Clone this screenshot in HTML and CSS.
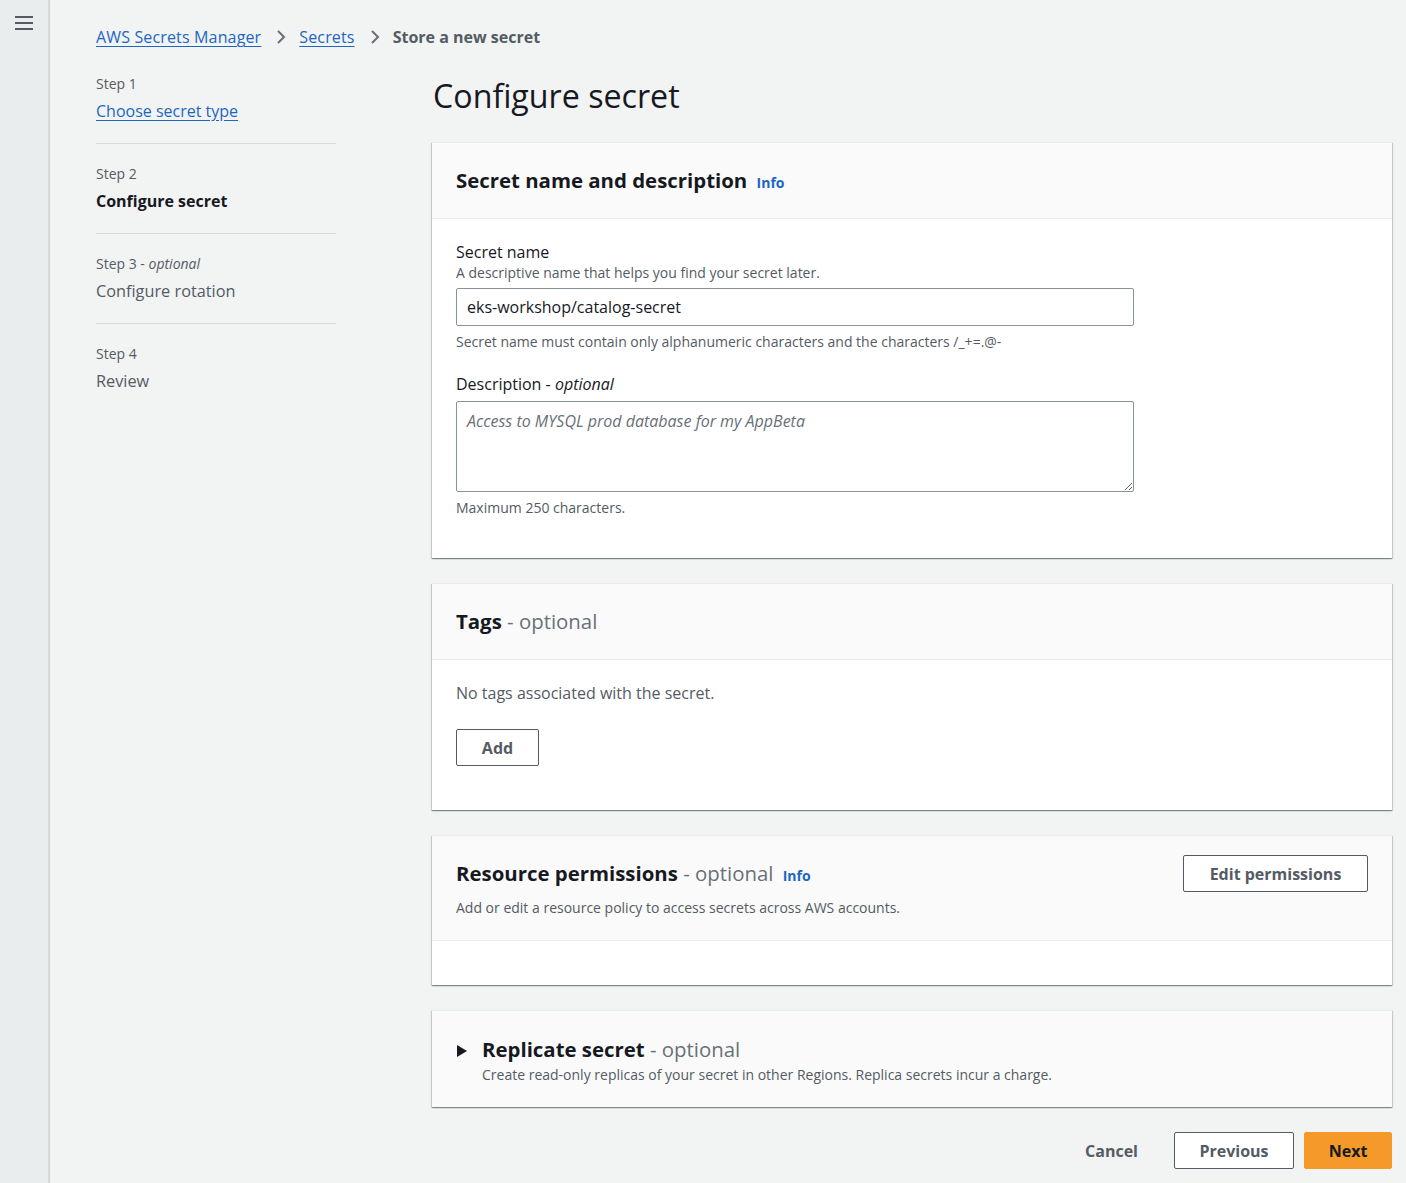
FILE: index.html
```html
<!DOCTYPE html>
<html lang="en">
<head>
<meta charset="utf-8">
<title>Store a new secret</title>
<link rel="stylesheet" href="styles.css">
</head>
<body>
<div class="app">
  <aside class="sidenav">
    <button class="menu-btn" aria-label="Open navigation">
      <svg width="18" height="14" viewBox="0 0 18 14"><path d="M0 1h18M0 7h18M0 13h18" stroke="#545b64" stroke-width="2"/></svg>
    </button>
  </aside>
  <div class="page">
    <nav class="breadcrumbs">
      <a href="#" class="crumb-link">AWS Secrets Manager</a>
      <svg class="chev" width="16" height="16" viewBox="0 0 16 16"><path d="M5 2l6 6-6 6" fill="none" stroke="#687078" stroke-width="2"/></svg>
      <a href="#" class="crumb-link">Secrets</a>
      <svg class="chev" width="16" height="16" viewBox="0 0 16 16"><path d="M5 2l6 6-6 6" fill="none" stroke="#687078" stroke-width="2"/></svg>
      <span class="crumb-current">Store a new secret</span>
    </nav>
    <div class="layout">
      <ol class="steps">
        <li class="step">
          <div class="step-label">Step 1</div>
          <a href="#" class="step-title link">Choose secret type</a>
        </li>
        <li class="step">
          <div class="step-label">Step 2</div>
          <div class="step-title active">Configure secret</div>
        </li>
        <li class="step">
          <div class="step-label">Step 3 - <i>optional</i></div>
          <div class="step-title muted">Configure rotation</div>
        </li>
        <li class="step last">
          <div class="step-label">Step 4</div>
          <div class="step-title muted">Review</div>
        </li>
      </ol>
      <main class="content">
        <h1 class="page-title">Configure secret</h1>

        <section class="panel">
          <header class="panel-header">
            <h2 class="panel-title">Secret name and description <a href="#" class="info">Info</a></h2>
          </header>
          <div class="panel-body">
            <div class="field">
              <label class="field-label">Secret name</label>
              <div class="field-desc">A descriptive name that helps you find your secret later.</div>
              <input class="text-input" type="text" value="eks-workshop/catalog-secret">
              <div class="field-hint">Secret name must contain only alphanumeric characters and the characters /_+=.@-</div>
            </div>
            <div class="field second">
              <label class="field-label">Description - <i>optional</i></label>
              <textarea class="text-area" placeholder="Access to MYSQL prod database for my AppBeta"></textarea>
              <div class="field-hint">Maximum 250 characters.</div>
            </div>
          </div>
        </section>

        <section class="panel">
          <header class="panel-header">
            <h2 class="panel-title">Tags <span class="opt">- optional</span></h2>
          </header>
          <div class="panel-body tags-body">
            <p class="empty-text">No tags associated with the secret.</p>
            <button class="btn add-btn">Add</button>
          </div>
        </section>

        <section class="panel">
          <header class="panel-header perm-header">
            <div class="perm-text">
              <h2 class="panel-title">Resource permissions <span class="opt">- optional</span> <a href="#" class="info">Info</a></h2>
              <div class="panel-desc">Add or edit a resource policy to access secrets across AWS accounts.</div>
            </div>
            <button class="btn edit-btn">Edit permissions</button>
          </header>
          <div class="panel-body empty-body"></div>
        </section>

        <section class="panel expand">
          <div class="expand-head">
            <span class="caret"><svg width="10" height="12" viewBox="0 0 10 12"><path d="M0 0l10 6-10 6z" fill="#16191f"/></svg></span>
            <div>
              <h2 class="panel-title">Replicate secret <span class="opt">- optional</span></h2>
              <div class="panel-desc">Create read-only replicas of your secret in other Regions. Replica secrets incur a charge.</div>
            </div>
          </div>
        </section>

        <div class="actions">
          <button class="btn link-btn">Cancel</button>
          <button class="btn prev-btn">Previous</button>
          <button class="btn primary">Next</button>
        </div>
      </main>
    </div>
  </div>
</div>
</body>
</html>
```
FILE: styles.css
```css
* { box-sizing: border-box; }
html, body { margin: 0; padding: 0; }
body {
  background: #f2f3f3;
  font-family: "Open Sans", "Liberation Sans", Arial, sans-serif;
  color: #16191f;
  font-size: 14px;
}
.app { display: flex; min-height: 100vh; }
.sidenav {
  width: 49px;
  flex: none;
  background: #eaeded;
  border-right: 1px solid #d5dbdb;
  box-shadow: 1px 0 1px rgba(0,28,36,0.12);
}
.menu-btn {
  border: 0; background: none; padding: 0;
  margin: 16px 0 0 15px;
  display: block;
}
.page { flex: 1; padding: 26px 14px 14px 47px; }
.breadcrumbs {
  display: flex; align-items: center;
  height: 22px;
  font-size: 16px;
  line-height: 22px;
}
.crumb-link { color: #1d67c0; text-decoration: underline; text-underline-offset: 3px; letter-spacing: 0.15px; }
.chev { margin: 0 10px 0 12px; }
.crumb-current { color: #545b64; font-weight: 700; }
.layout {
  display: grid;
  grid-template-columns: 240px 960px;
  column-gap: 96px;
  margin-top: 26px;
}
.steps { list-style: none; margin: 0; padding: 0; }
.step {
  padding: 20px 0 20px;
  border-bottom: 1px solid #d5dbdb;
}
.step:first-child { padding-top: 0; }
.step.last { border-bottom: 0; }
.step-label { font-size: 14px; line-height: 20px; color: #545b64; }
.step-title { display: block; margin-top: 5px; font-size: 16px; line-height: 24px; }
.step-title.link { color: #1d67c0; text-decoration: underline; text-underline-offset: 3px; }
.step-title.active { font-weight: 700; color: #16191f; }
.step-title.muted { color: #545b64; font-size: 16.3px; }

.content { padding-top: 2px; }
.page-title {
  margin: 0 0 26px 1px;
  font-size: 32.2px;
  line-height: 40px;
  font-weight: 400;
  color: #16191f;
}
.panel {
  background: #fff;
  border-top: 1px solid #eaeded;
  box-shadow: 0 1px 1px 0 rgba(0,28,36,0.3), 1px 1px 1px 0 rgba(0,28,36,0.15), -1px 1px 1px 0 rgba(0,28,36,0.15);
  margin-bottom: 25px;
}
.panel-header {
  background: #fafafa;
  border-bottom: 1px solid #eaeded;
  padding: 21px 24px 22px;
}
.panel-title {
  margin: 0;
  font-size: 20.4px;
  line-height: 32px;
  height: 32px;
  font-weight: 700;
  color: #16191f;
}
.panel-title .opt { font-weight: 400; color: #687078; }
.info {
  font-size: 14px; font-weight: 700; color: #1d67c0;
  line-height: 0;
  text-decoration: none; margin-left: 4px;
}
.panel-body { padding: 22px 24px 40px; }
.field-label { display: block; font-size: 16px; line-height: 22px; color: #16191f; }
.field-desc { font-size: 14px; line-height: 20px; color: #545b64; }
.text-input {
  display: block;
  width: 678px; height: 38px;
  margin-top: 5px;
  border: 1px solid #879596;
  border-radius: 2px;
  padding: 0 10px;
  font-family: inherit; font-size: 16px; color: #16191f;
  background: #fff;
}
.field-hint { margin-top: 6px; font-size: 14px; line-height: 20px; color: #545b64; }
.field.second { margin-top: 21px; }
.text-area {
  display: block;
  width: 678px; height: 91px;
  margin-top: 6px;
  border: 1px solid #879596;
  border-radius: 2px;
  padding: 8px 10px;
  font-family: inherit; font-size: 16px; line-height: 22px;
  resize: vertical;
  background: #fff;
}
.text-area::placeholder { font-style: italic; color: #687078; }

.tags-body { padding: 22px 24px 44px; }
.empty-text { margin: 0; font-size: 16px; line-height: 22px; color: #545b64; }
.btn {
  font-family: inherit;
  font-size: 16px; font-weight: 700;
  height: 37px;
  border-radius: 2px;
  background: #fff;
  color: #545b64;
  border: 1px solid #545b64;
  cursor: pointer;
}
.add-btn { margin-top: 25px; width: 83px; }

.perm-header {
  display: flex; justify-content: space-between; align-items: flex-start;
  padding-bottom: 22px;
}
.panel-desc { margin-top: 9px; font-size: 14px; line-height: 20px; color: #545b64; }
.edit-btn { width: 185px; margin-top: -2px; }
.empty-body { height: 44px; padding: 0; }

.expand { background: #fafafa; }
.expand-head { display: flex; padding: 22px 24px 22px 25px; }
.expand-head .panel-desc { margin-top: 0; }
.caret { width: 25px; flex: none; padding-top: 9px; }

.actions {
  display: flex; justify-content: flex-end; align-items: center;
  margin-top: 25px;
}
.link-btn { border-color: transparent; background: transparent; padding: 0 20px; }
.prev-btn { width: 120px; margin-left: 15px; }
.primary {
  width: 88px; margin-left: 10px;
  background: #f4992a; border-color: #f4992a; color: #16191f;
}
```
